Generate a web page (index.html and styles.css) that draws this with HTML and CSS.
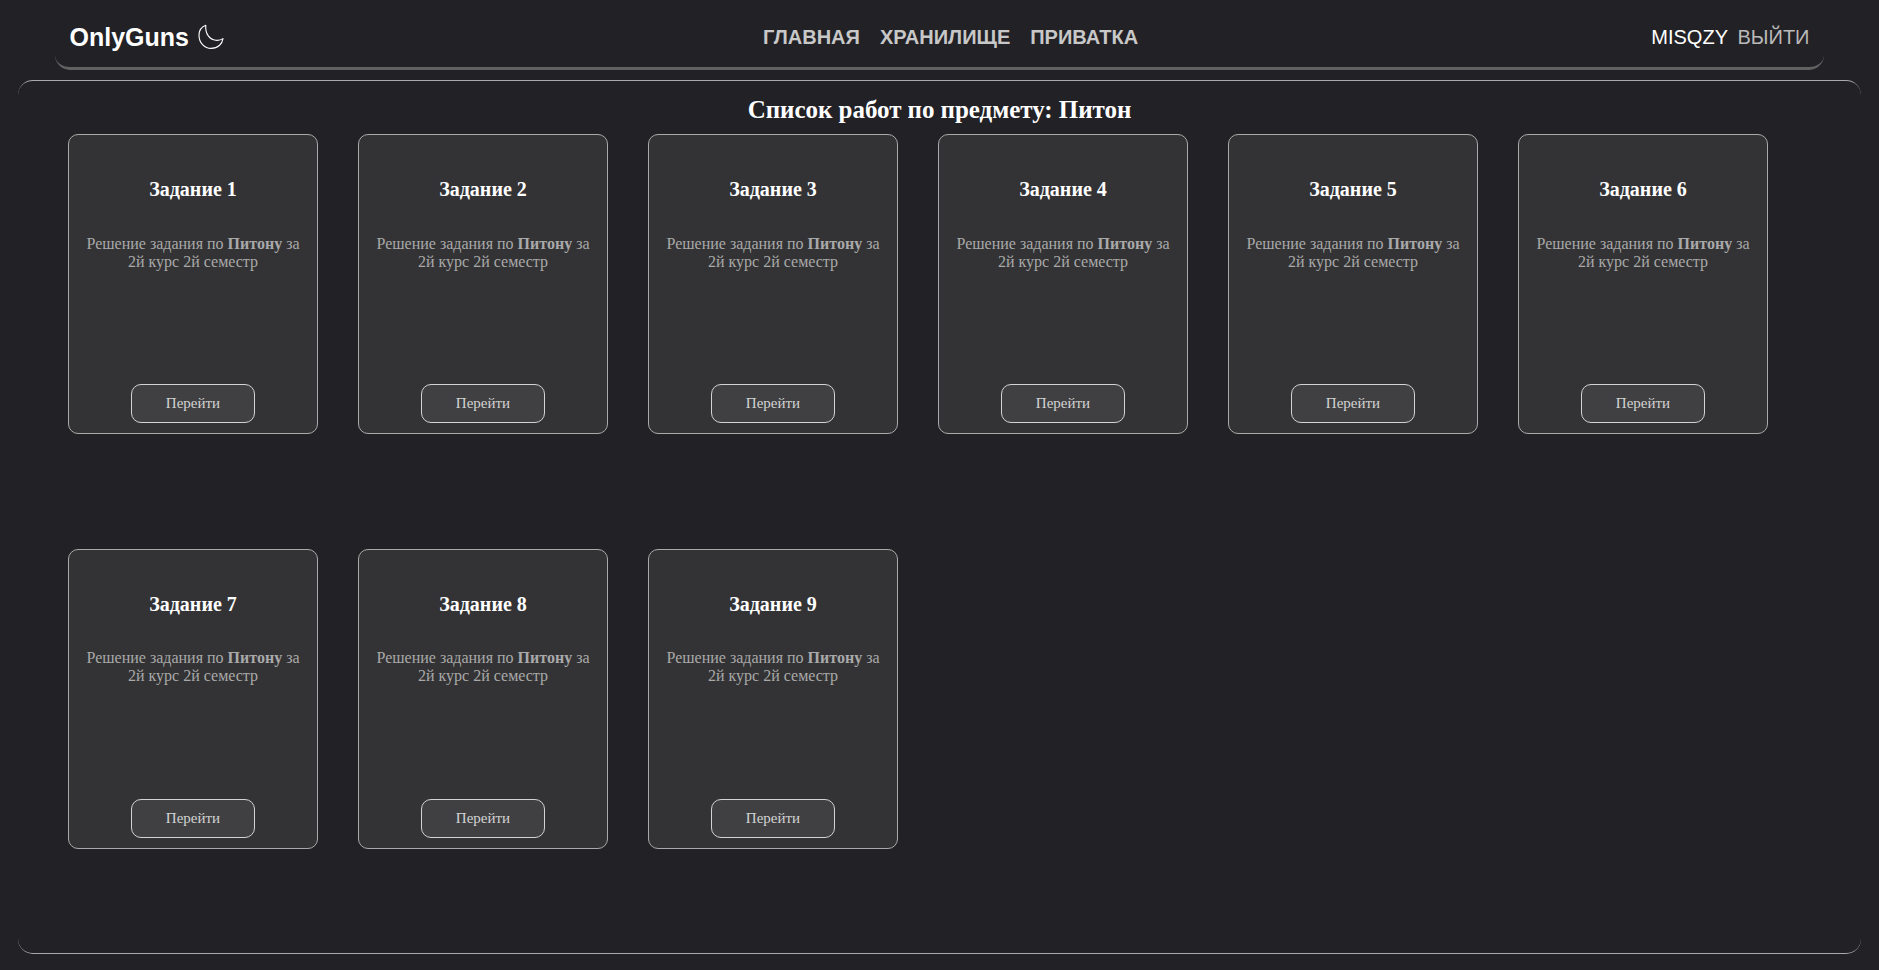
FILE: index.html
```
<!DOCTYPE html>
<html lang="ru">
<head>
<meta charset="utf-8">
<title>OnlyGuns</title>
<link rel="stylesheet" href="styles.css">
</head>
<body>
<header class="header">
  <div class="brand">
    <span class="logo">OnlyGuns</span>
    <svg class="moon" viewBox="0 0 26 26"><path d="M7.8 1.2C3.7 2.7 1 6.3 1 11.2C1 18.700 6.300 24.400 13.300 24.400C20 24.400 24.200 20 25 14.600C22.800 16 20.300 16.600 17.800 16.200C11.500 15.700 7 9.600 7.800 1.200Z"/></svg>
  </div>
  <nav class="nav"><a class="link">ГЛАВНАЯ</a><a class="link">ХРАНИЛИЩЕ</a><a class="link">ПРИВАТКА</a></nav>
  <div class="user"><span class="name">MISQZY</span><a class="exit">ВЫЙТИ</a></div>
</header>
<main class="main">
  <h1 class="title">Список работ по предмету: Питон</h1>
  <div class="cards">
    <article class="card"><h3 class="task">Задание 1</h3><p class="text">Решение задания по <b>Питону</b> за 2й курс 2й семестр</p><a class="button">Перейти</a></article>
    <article class="card"><h3 class="task">Задание 2</h3><p class="text">Решение задания по <b>Питону</b> за 2й курс 2й семестр</p><a class="button">Перейти</a></article>
    <article class="card"><h3 class="task">Задание 3</h3><p class="text">Решение задания по <b>Питону</b> за 2й курс 2й семестр</p><a class="button">Перейти</a></article>
    <article class="card"><h3 class="task">Задание 4</h3><p class="text">Решение задания по <b>Питону</b> за 2й курс 2й семестр</p><a class="button">Перейти</a></article>
    <article class="card"><h3 class="task">Задание 5</h3><p class="text">Решение задания по <b>Питону</b> за 2й курс 2й семестр</p><a class="button">Перейти</a></article>
    <article class="card"><h3 class="task">Задание 6</h3><p class="text">Решение задания по <b>Питону</b> за 2й курс 2й семестр</p><a class="button">Перейти</a></article>
    <article class="card"><h3 class="task">Задание 7</h3><p class="text">Решение задания по <b>Питону</b> за 2й курс 2й семестр</p><a class="button">Перейти</a></article>
    <article class="card"><h3 class="task">Задание 8</h3><p class="text">Решение задания по <b>Питону</b> за 2й курс 2й семестр</p><a class="button">Перейти</a></article>
    <article class="card"><h3 class="task">Задание 9</h3><p class="text">Решение задания по <b>Питону</b> за 2й курс 2й семестр</p><a class="button">Перейти</a></article>
  </div>
</main>
</body>
</html>
```
FILE: styles.css
```
* { box-sizing: border-box; }
body {
  margin: 0;
  height: 970px;
  overflow: hidden;
  background: #222126;
  color: #fff;
  font-family: "Liberation Serif", "Times New Roman", serif;
}
.header {
  display: grid;
  grid-template-columns: 1fr auto 1fr;
  align-items: center;
  height: 70px;
  margin: 0 55px;
  padding: 6px 14px 0;
  border-bottom: 3px solid #616161;
  border-radius: 15px;
  font: 20px/24px "Liberation Sans", Arial, sans-serif;
}
.brand { display: flex; align-items: center; }
.logo {
  margin-left: 0.5px;
  font-size: 25px;
  line-height: 28px;
  font-weight: 700;
}
.moon {
  width: 26px;
  height: 26px;
  margin-left: 9.5px;
  fill: none;
  stroke: #fff;
  stroke-width: 1.1;
  stroke-linejoin: round;
}
.nav {
  display: flex;
  gap: 20px;
  margin-left: 22px;
  font-weight: 700;
  color: #c8c8c8;
}
.user { display: flex; justify-content: flex-end; gap: 9.5px; padding-right: 0.5px; }
.exit { color: #b9b9b9; }
.main {
  height: 874px;
  margin: 10px 18px 0;
  padding: 14px 50px 0;
  border: 0 solid #a9a9a9;
  border-width: 1px 0;
  border-radius: 15px;
}
.title {
  margin: 0 0 10px;
  font-size: 25px;
  line-height: 29px;
  letter-spacing: -0.04px;
  text-align: center;
}
.cards {
  display: grid;
  grid-template-columns: repeat(6, 250px);
  grid-auto-rows: 300px;
  gap: 115px 40px;
}
.card {
  display: flex;
  flex-direction: column;
  align-items: center;
  padding: 43px 10px 10px;
  border: 1px solid #a9a9a9;
  border-radius: 10px;
  background: #333335;
  text-align: center;
}
.task { margin: 0; font-size: 20px; line-height: 22px; }
.text {
  margin: 35px 0 0;
  font-size: 16px;
  line-height: 18px;
  color: #a9a9a9;
}
.card:nth-child(n+7) .text { margin-top: 34px; }
.button {
  width: 124px;
  height: 39px;
  margin-top: auto;
  border: 1px solid #d3d3d3;
  border-radius: 10px;
  background: #404042;
  color: #d3d3d3;
  font-size: 15px;
  line-height: 37px;
}
```
